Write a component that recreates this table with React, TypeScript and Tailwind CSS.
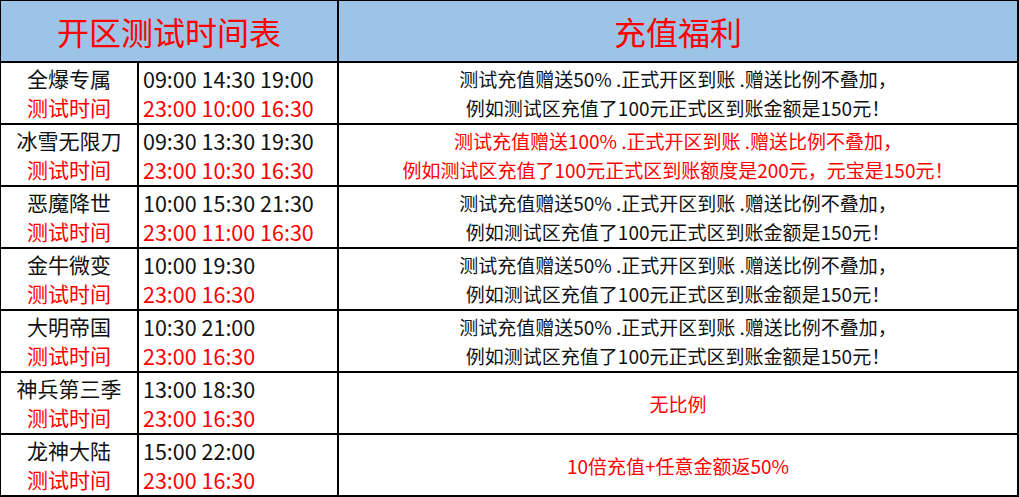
import React from "react";

type Row = {
  name: string;
  open: string;
  test: string;
  lines: string[];
  red: boolean;
};

const rows: Row[] = [
  {
    name: "全爆专属",
    open: "09:00 14:30 19:00",
    test: "23:00 10:00 16:30",
    lines: ["测试充值赠送50% .正式开区到账 .赠送比例不叠加，", "例如测试区充值了100元正式区到账金额是150元！"],
    red: false,
  },
  {
    name: "冰雪无限刀",
    open: "09:30 13:30 19:30",
    test: "23:00 10:30 16:30",
    lines: ["测试充值赠送100% .正式开区到账 .赠送比例不叠加，", "例如测试区充值了100元正式区到账额度是200元，元宝是150元！"],
    red: true,
  },
  {
    name: "恶魔降世",
    open: "10:00 15:30 21:30",
    test: "23:00 11:00 16:30",
    lines: ["测试充值赠送50% .正式开区到账 .赠送比例不叠加，", "例如测试区充值了100元正式区到账金额是150元！"],
    red: false,
  },
  {
    name: "金牛微变",
    open: "10:00 19:30",
    test: "23:00 16:30",
    lines: ["测试充值赠送50% .正式开区到账 .赠送比例不叠加，", "例如测试区充值了100元正式区到账金额是150元！"],
    red: false,
  },
  {
    name: "大明帝国",
    open: "10:30 21:00",
    test: "23:00 16:30",
    lines: ["测试充值赠送50% .正式开区到账 .赠送比例不叠加，", "例如测试区充值了100元正式区到账金额是150元！"],
    red: false,
  },
  {
    name: "神兵第三季",
    open: "13:00 18:30",
    test: "23:00 16:30",
    lines: ["无比例"],
    red: true,
  },
  {
    name: "龙神大陆",
    open: "15:00 22:00",
    test: "23:00 16:30",
    lines: ["10倍充值+任意金额返50%"],
    red: true,
  },
];

export default function App() {
  return (
    <div
      className="w-[1019px] h-[497px] bg-white overflow-hidden"
      style={{ fontFamily: '"Noto Sans CJK SC", "Noto Sans", sans-serif' }}
    >
      <div className="flex flex-col border-l border-t border-black w-[1019px]">
        <div className="flex h-[62px] bg-[#9dc3e6]">
          <div className="w-[338px] border-r-2 border-b-2 border-black flex items-center justify-center text-[32px] text-[#ff0000] leading-none">
            开区测试时间表
          </div>
          <div className="w-[680px] border-r-2 border-b-2 border-black flex items-center justify-center text-[32px] text-[#ff0000] leading-none">
            充值福利
          </div>
        </div>
        {rows.map((r) => (
          <div key={r.name} className="flex h-[62px] bg-white">
            <div className="w-[138px] border-r-2 border-b-2 border-black flex flex-col items-center justify-center text-[21px] leading-[29px]">
              <span className="text-[#111111]">{r.name}</span>
              <span className="text-[#ff0000]">测试时间</span>
            </div>
            <div className="w-[200px] border-r-2 border-b-2 border-black flex flex-col justify-center pl-1 text-[21.5px] leading-[29px]">
              <span className="text-[#111111]">{r.open}</span>
              <span className="text-[#ff0000]">{r.test}</span>
            </div>
            <div
              className={
                "w-[680px] border-r-2 border-b-2 border-black flex flex-col items-center justify-center text-[19px] leading-[29px] " +
                (r.red ? "text-[#ff0000]" : "text-[#111111]")
              }
            >
              {r.lines.map((l, i) => (
                <span key={i} className="whitespace-pre">
                  {l}
                </span>
              ))}
            </div>
          </div>
        ))}
      </div>
    </div>
  );
}
